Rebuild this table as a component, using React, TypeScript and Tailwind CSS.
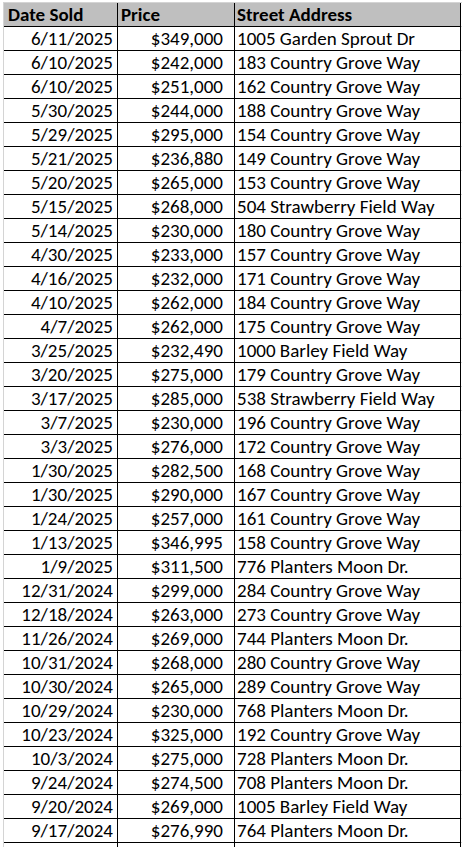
const rows: [string, string, string][] = [
  ['6/11/2025', '$349,000', '1005 Garden Sprout Dr'],
  ['6/10/2025', '$242,000', '183 Country Grove Way'],
  ['6/10/2025', '$251,000', '162 Country Grove Way'],
  ['5/30/2025', '$244,000', '188 Country Grove Way'],
  ['5/29/2025', '$295,000', '154 Country Grove Way'],
  ['5/21/2025', '$236,880', '149 Country Grove Way'],
  ['5/20/2025', '$265,000', '153 Country Grove Way'],
  ['5/15/2025', '$268,000', '504 Strawberry Field Way'],
  ['5/14/2025', '$230,000', '180 Country Grove Way'],
  ['4/30/2025', '$233,000', '157 Country Grove Way'],
  ['4/16/2025', '$232,000', '171 Country Grove Way'],
  ['4/10/2025', '$262,000', '184 Country Grove Way'],
  ['4/7/2025', '$262,000', '175 Country Grove Way'],
  ['3/25/2025', '$232,490', '1000 Barley Field Way'],
  ['3/20/2025', '$275,000', '179 Country Grove Way'],
  ['3/17/2025', '$285,000', '538 Strawberry Field Way'],
  ['3/7/2025', '$230,000', '196 Country Grove Way'],
  ['3/3/2025', '$276,000', '172 Country Grove Way'],
  ['1/30/2025', '$282,500', '168 Country Grove Way'],
  ['1/30/2025', '$290,000', '167 Country Grove Way'],
  ['1/24/2025', '$257,000', '161 Country Grove Way'],
  ['1/13/2025', '$346,995', '158 Country Grove Way'],
  ['1/9/2025', '$311,500', '776 Planters Moon Dr.'],
  ['12/31/2024', '$299,000', '284 Country Grove Way'],
  ['12/18/2024', '$263,000', '273 Country Grove Way'],
  ['11/26/2024', '$269,000', '744 Planters Moon Dr.'],
  ['10/31/2024', '$268,000', '280 Country Grove Way'],
  ['10/30/2024', '$265,000', '289 Country Grove Way'],
  ['10/29/2024', '$230,000', '768 Planters Moon Dr.'],
  ['10/23/2024', '$325,000', '192 Country Grove Way'],
  ['10/3/2024', '$275,000', '728 Planters Moon Dr.'],
  ['9/24/2024', '$274,500', '708 Planters Moon Dr.'],
  ['9/20/2024', '$269,000', '1005 Barley Field Way'],
  ['9/17/2024', '$276,990', '764 Planters Moon Dr.'],
];

export default function App() {
  return (
    <div className="w-[462px] h-[847px] overflow-hidden bg-white pt-[2px] pl-[3px] font-['Calibri','Carlito','Lato',sans-serif] text-[19px] leading-[22px] text-black">
      <div className="border-t border-l border-[#d4d4d4]">
        {/* Header */}
        <div className="grid grid-cols-[114px_117px_226px_1px] h-[24px] font-bold">
          <div className="bg-[#bfbfbf] border-b border-r border-black flex items-end pl-[4px]">Date Sold</div>
          <div className="bg-[#bfbfbf] border-b border-r border-black flex items-end pl-[3px]">Price</div>
          <div className="bg-[#bfbfbf] border-b border-r border-black flex items-end pl-[2px] whitespace-nowrap">Street Address</div>
          <div className="border-b border-[#d4d4d4]" />
        </div>

        {/* Rows */}
        {rows.map(([date, price, address], i) => (
          <div key={i} className="grid grid-cols-[114px_117px_226px_1px] h-[24px]">
            <div className="border-b border-r border-black flex items-end justify-end pr-[4px]">{date}</div>
            <div className="border-b border-r border-black flex items-end justify-end pr-[11px]">{price}</div>
            <div className="border-b border-r border-black flex items-end pl-[2px] whitespace-nowrap overflow-hidden">{address}</div>
            <div className="border-b border-[#d4d4d4]" />
          </div>
        ))}

        {/* next empty row */}
        <div className="grid grid-cols-[114px_117px_226px_1px] h-[24px]">
          <div className="border-r border-black" />
          <div className="border-r border-black" />
          <div className="border-r border-black" />
          <div />
        </div>
      </div>
    </div>
  );
}
